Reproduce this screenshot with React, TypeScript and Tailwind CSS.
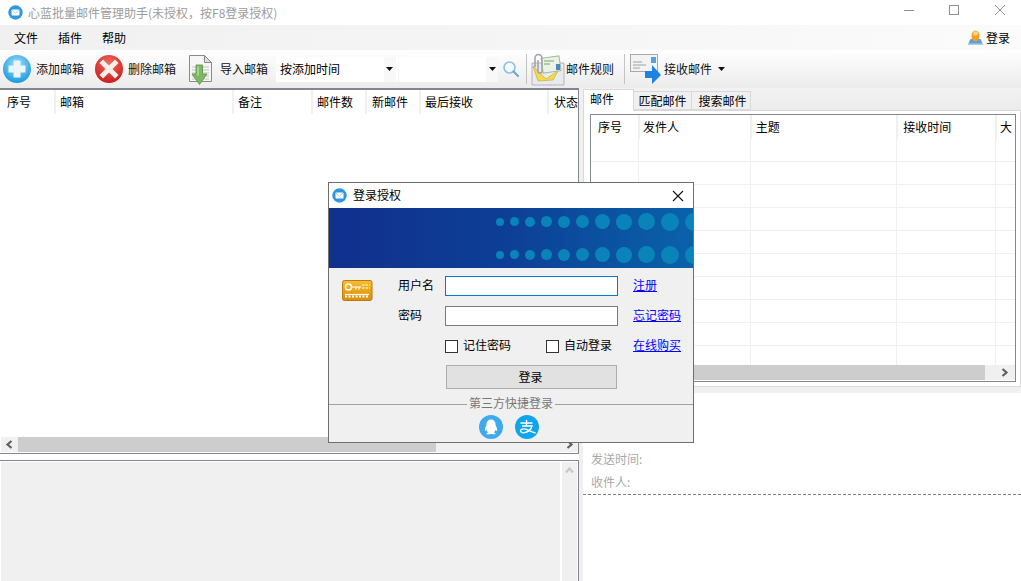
import React from "react";

const Chevron = ({ d, c = "#606060" }: { d: "l" | "r" | "u"; c?: string }) => (
  <svg width="9" height="9" viewBox="0 0 9 9" fill="none" stroke={c} strokeWidth="2.2">
    {d === "l" && <path d="M6.5 1 L2.5 4.5 L6.5 8" />}
    {d === "r" && <path d="M2.5 1 L6.5 4.5 L2.5 8" />}
    {d === "u" && <path d="M1 6.5 L4.5 2.5 L8 6.5" />}
  </svg>
);

const Caret = () => (
  <svg width="7" height="4" viewBox="0 0 7 4"><path d="M0 0H7L3.5 4Z" fill="#111" /></svg>
);

const MailLogo = () => (
  <svg width="15" height="15" viewBox="0 0 15 15">
    <circle cx="7.5" cy="7.5" r="7.2" fill="#2f97e0" />
    <rect x="3.5" y="4.5" width="8" height="6" rx="1" fill="#fff" />
    <path d="M3.8 5 L7.5 8 L11.2 5" fill="none" stroke="#8cc6ee" strokeWidth="0.8" />
  </svg>
);

const PlusIcon = () => (
  <svg width="30" height="30" viewBox="0 0 30 30">
    <defs>
      <radialGradient id="pb" cx="50%" cy="35%" r="65%">
        <stop offset="0" stopColor="#a5def8" />
        <stop offset="1" stopColor="#189be0" />
      </radialGradient>
    </defs>
    <circle cx="15" cy="15" r="14" fill="url(#pb)" />
    <path d="M11.5 6.5h7v5h5v7h-5v5h-7v-5h-5v-7h5z" fill="#eaf6fc" />
  </svg>
);

const DelIcon = () => (
  <svg width="30" height="30" viewBox="0 0 30 30">
    <defs>
      <radialGradient id="pr" cx="50%" cy="30%" r="70%">
        <stop offset="0" stopColor="#f26a62" />
        <stop offset="1" stopColor="#c81e1e" />
      </radialGradient>
    </defs>
    <circle cx="15" cy="15" r="14" fill="url(#pr)" />
    <path d="M9 9 L21 21 M21 9 L9 21" stroke="#f7efe8" strokeWidth="5" strokeLinecap="square" />
  </svg>
);

const ImportIcon = () => (
  <svg width="25" height="31" viewBox="0 0 25 31">
    <path d="M0.5 1.5h15l7 7v19h-22z" fill="#f6f6f6" stroke="#8a8a8a" />
    <path d="M15.5 1.5v7h7z" fill="#dcdcdc" stroke="#8a8a8a" />
    <path d="M3 13h17M3 16h17M3 19h17M3 22h17M3 25h17" stroke="#c4c4c4" />
    <path d="M7 11h6.5v9h4.5l-7.500 10.500L3 20h4z" fill="#7fb865" stroke="#659a4d" strokeWidth="0.9" />
    <path d="M9 12.5v9" stroke="#b5dba3" strokeWidth="1.5" />
  </svg>
);

const RuleIcon = () => (
  <svg width="34" height="33" viewBox="0 0 34 33">
    <rect x="1" y="10" width="32" height="22" fill="#e6ebef" />
    <rect x="1" y="10" width="32" height="22" fill="none" stroke="#e2a4ab" strokeDasharray="2 2" />
    <rect x="1" y="10" width="32" height="22" fill="none" stroke="#9db4d6" strokeDasharray="2 2" strokeDashoffset="2" />
    <rect x="11" y="4" width="18" height="15" fill="#eaf3e6" stroke="#a7b8a0" transform="rotate(-8 20 11)" />
    <path d="M13 8h10M13 11h6" stroke="#9cc08f" strokeWidth="1.5" />
    <rect x="25" y="11" width="4" height="6" fill="#4f86c0" />
    <path d="M2 13 L15 26 L27 18 L22 27 L7 28 Z" fill="#f3d850" stroke="#cfae30" strokeWidth="0.7" />
    <path d="M4 14 V5 A3.5 3.5 0 0 1 11 5 V18 A2 2 0 0 1 7 18 V7" fill="none" stroke="#9aa2a8" strokeWidth="1.5" />
  </svg>
);

const RecvIcon = () => (
  <svg width="32" height="30" viewBox="0 0 32 30">
    <rect x="0.5" y="0.5" width="27" height="17" fill="#f3f3f3" stroke="#a8a8a8" />
    <path d="M3 8h9M3 11h13M3 14h7" stroke="#a0a0a0" />
    <rect x="21" y="3" width="5" height="6" fill="#5aa0dd" />
    <path d="M15 17h7v-6l9 10-9 9v-6h-7z" fill="#1e82e0" />
  </svg>
);

const UserIcon = () => (
  <svg width="15" height="15" viewBox="0 0 15 15">
    <path d="M0 14.5 L2.5 9 H12.5 L15 14.5Z" fill="#5d9fd8" />
    <path d="M1 13.5h13v1H1z" fill="#a9d0ee" />
    <ellipse cx="7.5" cy="6" rx="4" ry="5.5" fill="#f2a024" />
    <ellipse cx="7.5" cy="3.4" rx="2.4" ry="2.2" fill="#fbd67e" />
  </svg>
);

const KeyCard = () => (
  <svg width="31" height="22" viewBox="0 0 31 22">
    <defs>
      <linearGradient id="kc" x1="0" y1="0" x2="0" y2="1">
        <stop offset="0" stopColor="#f7bd2e" />
        <stop offset="1" stopColor="#dc8e08" />
      </linearGradient>
    </defs>
    <rect x="0.5" y="0.5" width="29.5" height="20" rx="2" fill="url(#kc)" stroke="#b97a10" />
    <circle cx="6.5" cy="7" r="3" fill="none" stroke="#fff" strokeWidth="1.4" />
    <path d="M9.5 7H19M14 7v2.5M17 7v2.5" stroke="#fff" strokeWidth="1.2" />
    <path d="M20 5h8M20 8h8" stroke="#fff" strokeDasharray="2.5 1" />
    <path d="M3 14.5h24" stroke="#fff" strokeWidth="1.2" />
    <path d="M3 16.5h24" stroke="#fff" strokeWidth="2" strokeDasharray="2 1.5" />
  </svg>
);

const QQIcon = () => (
  <svg width="24" height="24" viewBox="0 0 24 24">
    <circle cx="12" cy="12" r="12" fill="#3fa9ee" />
    <path d="M12 4.5c-3.2 0-4.6 2.6-4.6 5.4 0 .7-1.6 3-1.6 5 0 1.4.8 1.2 1.7.2.3 1 .9 1.8 1.5 2.3-1 .4-1.7.9-1.4 1.5.4.5 3.2.5 4.4-.2 1.2.7 4 .7 4.4.2.3-.6-.4-1.1-1.4-1.5.6-.5 1.2-1.3 1.5-2.3.9 1 1.7 1.2 1.7-.2 0-2-1.6-4.3-1.6-5 0-2.8-1.4-5.4-4.6-5.4z" fill="#fff" />
  </svg>
);

const AlipayIcon = () => (
  <svg width="24" height="24" viewBox="0 0 24 24">
    <circle cx="12" cy="12" r="12" fill="#0ea5ea" />
    <path d="M5.5 8h12M11.5 4.8v6M7 11h10c-1 3.6-4.5 6-7.5 6.6-2.5.4-4-.4-4-1.8 0-1.6 2.5-2.4 5-1.6 3 1 6 2.8 10 3.8" fill="none" stroke="#fff" strokeWidth="1.4" />
  </svg>
);

const Dots = () => {
  const sizes = [8, 9, 10, 11, 12, 13, 15, 16, 17, 18, 18];
  return (
    <div className="flex items-center gap-[6px] h-[18px] pl-[167px]">
      {sizes.map((s, i) => (
        <span
          key={i}
          className="rounded-full bg-[#0a84b8] shrink-0"
          style={{ width: s, height: s }}
        />
      ))}
    </div>
  );
};

const leftCols = [
  ["序号", "w-[54px] pl-[7px]"],
  ["邮箱", "w-[178px] border-l-2 border-[#f0f0f0] pl-[4px]"],
  ["备注", "w-[79px] border-l-2 border-[#f0f0f0] pl-[4px]"],
  ["邮件数", "w-[54px] border-l-2 border-[#f0f0f0] pl-[4px]"],
  ["新邮件", "w-[54px] border-l-2 border-[#f0f0f0] pl-[5px]"],
  ["最后接收", "w-[128px] border-l-2 border-[#f0f0f0] pl-[4px]"],
  ["状态", "w-[30px] border-l-2 border-[#f0f0f0] pl-[5px]"],
];

const rightCols = [
  ["序号", "w-[47px] pl-[7px]"],
  ["发件人", "w-[112px] border-l-2 border-[#f0f0f0] pl-[3px]"],
  ["主题", "w-[147px] border-l-2 border-[#f0f0f0] pl-[4px]"],
  ["接收时间", "w-[99px] border-l-2 border-[#f0f0f0] pl-[5px]"],
  ["大", "w-[20px] border-l-2 border-[#f0f0f0] pl-[3px]"],
];

const gridCols = ["w-[48px]", "w-[112px]", "w-[147px]", "w-[99px]", "w-[19px]"];

function ToolText({ children, cls = "" }: { children: React.ReactNode; cls?: string }) {
  return <span className={`text-[12px] leading-[16px] text-[#111] whitespace-nowrap ${cls}`}>{children}</span>;
}

export default function App() {
  return (
    <div
      className="relative w-[1021px] h-[581px] overflow-hidden bg-white text-black flex flex-col"
      style={{ fontFamily: '"Noto Sans CJK SC", "Liberation Sans", sans-serif' }}
    >
      {/* title bar */}
      <div className="h-[25px] shrink-0 flex items-center bg-white pl-[8px]">
        <MailLogo />
        <span className="ml-[5px] text-[12px] text-[#9c9c9c]">心蓝批量邮件管理助手(未授权，按F8登录授权)</span>
        <div className="ml-auto flex items-center h-full">
          <svg width="120" height="20" viewBox="0 0 120 20" className="mb-[4px]" fill="none" stroke="#8f8f8f">
            <path d="M3 9.5H13" />
            <rect x="48.5" y="4.5" width="9" height="9" />
            <path d="M94 4L104 14M104 4L94 14" />
          </svg>
        </div>
      </div>

      {/* menu */}
      <div className="h-[25px] shrink-0 flex items-center bg-gradient-to-r from-[#f0f0f0] via-[#f5f5f5] to-[#fbfbfb] text-[12px] pl-[14px] pr-[11px]">
        <span className="w-[44px]">文件</span>
        <span className="w-[44px]">插件</span>
        <span>帮助</span>
        <div className="ml-auto flex items-center gap-[3px]">
          <UserIcon />
          <span>登录</span>
        </div>
      </div>

      {/* toolbar */}
      <div className="h-[38px] shrink-0 flex items-center bg-gradient-to-b from-white to-[#ececec] pl-[2px]">
        <PlusIcon />
        <ToolText cls="ml-[4px]">添加邮箱</ToolText>
        <div className="ml-[10px]"><DelIcon /></div>
        <ToolText cls="ml-[4px]">删除邮箱</ToolText>
        <div className="ml-[13px]"><ImportIcon /></div>
        <ToolText cls="ml-[6px]">导入邮箱</ToolText>
        <div className="ml-[8px] w-[122px] h-[25px] bg-white flex items-center pl-[4px] justify-between text-[12px]">
          <span>按添加时间</span>
          <div className="w-[12px] h-full bg-[#f8f8f8] flex items-center pl-[2px] mr-[2px]"><Caret /></div>
        </div>
        <div className="ml-[1px] w-[99px] h-[25px] bg-white flex items-center justify-end">
          <div className="w-[12px] h-full bg-[#f8f8f8] flex items-center pl-[3px]"><Caret /></div>
        </div>
        <svg width="18" height="18" viewBox="0 0 18 18" className="ml-[4px]" fill="none">
          <circle cx="7.5" cy="7.5" r="5.5" stroke="#8fc1e4" strokeWidth="1.6" fill="#f4fbff" />
          <path d="M11.5 11.5L16 16" stroke="#6ea9d6" strokeWidth="2.2" strokeLinecap="round" />
        </svg>
        <div className="ml-[6px] w-px h-[30px] bg-[#c4c4c4]" />
        <div className="ml-[4px]"><RuleIcon /></div>
        <ToolText cls="ml-px">邮件规则</ToolText>
        <div className="ml-[10px] w-px h-[30px] bg-[#c4c4c4]" />
        <div className="ml-[5px]"><RecvIcon /></div>
        <ToolText cls="ml-[2px]">接收邮件</ToolText>
        <div className="ml-[6px]"><Caret /></div>
      </div>

      {/* main */}
      <div className="flex-1 flex min-h-0">
        {/* left */}
        <div className="w-[579px] shrink-0 flex flex-col">
          <div className="h-[366px] shrink-0 border-t-2 border-r border-b border-[#828790] flex flex-col">
            <div className="h-[24px] flex items-center text-[12px] shrink-0">
              {leftCols.map(([t, w], i) => (
                <div key={i} className={`${w} h-full flex items-center whitespace-nowrap`}>{t}</div>
              ))}
            </div>
            <div className="flex-1" />
            <div className="h-[15px] mb-px ml-px flex bg-[#f0f0f0] shrink-0">
              <div className="w-[17px] flex items-center justify-center"><Chevron d="l" /></div>
              <div className="w-[418px] bg-[#cdcdcd]" />
              <div className="flex-1 flex items-center justify-end pr-[4px]"><Chevron d="r" /></div>
            </div>
          </div>
          <div className="h-[6px] shrink-0 bg-white" />
          <div className="flex-1 min-h-0 border-t border-r border-[#828790] bg-white pl-px pt-px pr-px">
            <div className="h-full bg-[#f0f0f0] flex justify-end">
              <div className="w-[17px] border-l-2 border-white flex justify-center pt-[4px]">
                <Chevron d="u" c="#c8c8c8" />
              </div>
            </div>
          </div>
        </div>

        {/* right */}
        <div className="flex-1 min-w-0 flex flex-col pl-[4px] bg-[#f0f0f0]">
          <div className="h-[305px] shrink-0 flex flex-col bg-[#f0f0f0]">
            <div className="h-[22px] shrink-0 flex items-end text-[12px] bg-gradient-to-b from-[#f2f2f2] to-[#ececec] relative">
              <div className="w-[51px] h-[22px] bg-white border border-b-0 border-[#d9d9d9] pl-[6px] pb-[4px] flex items-center relative z-10 -mb-px">邮件</div>
              <div className="w-[58px] h-[19px] bg-[#f0f0f0] border-y border-r border-[#d9d9d9] flex items-center justify-center whitespace-nowrap">匹配邮件</div>
              <div className="w-[59px] h-[19px] bg-[#f0f0f0] border-y border-r border-[#d9d9d9] flex items-center justify-center pl-[3px] whitespace-nowrap">搜索邮件</div>
            </div>
            <div className="h-[277px] shrink-0 mr-0 bg-white border border-[#d9d9d9] pl-[6px] pt-[3px] pr-[4px]">
              <div className="h-[268px] border border-[#828790] flex flex-col">
                <div className="h-[24px] shrink-0 flex text-[12px]">
                  {rightCols.map(([t, w], i) => (
                    <div key={i} className={`${w} h-full flex items-center overflow-hidden whitespace-nowrap`}>{t}</div>
                  ))}
                </div>
                <div className="flex-1 min-h-0 overflow-hidden">
                  {Array.from({ length: 10 }).map((_, r) => (
                    <div key={r} className="flex h-[23px] border-b border-[#f0f0f0]">
                      {gridCols.map((w, i) => (
                        <div key={i} className={`${w} h-full border-r border-[#f0f0f0] last:border-r-0`} />
                      ))}
                    </div>
                  ))}
                </div>
                <div className="h-[15px] mb-px flex bg-[#f0f0f0] shrink-0">
                  <div className="flex-1 bg-[#cdcdcd]" />
                  <div className="w-[30px] flex items-center justify-end pr-[6px]"><Chevron d="r" /></div>
                </div>
              </div>
            </div>
          </div>
          <div className="flex-1 min-h-0 bg-white text-[12px] text-[#a8a8a8] flex flex-col pl-[8px]">
            <div className="h-[54px] shrink-0" />
            <div className="h-[23px] flex items-center">发送时间:</div>
            <div className="h-[23px] flex items-center">收件人:</div>
            <div className="-ml-[8px] mt-px border-t border-dashed border-[#808080]" />
          </div>
        </div>
      </div>

      {/* dialog */}
      <div className="absolute left-[328px] top-[182px] w-[366px] h-[261px] border border-[#6f6f6f] bg-[#f0f0f0] flex flex-col">
        <div className="h-[25px] shrink-0 bg-white flex items-center pl-[3px] pr-[8px]">
          <MailLogo />
          <span className="ml-[6px] text-[12px] pb-[2px]">登录授权</span>
          <svg width="12" height="12" viewBox="0 0 12 12" className="ml-auto mr-px" fill="none" stroke="#111" strokeWidth="1.1">
            <path d="M1 1L11 11M11 1L1 11" />
          </svg>
        </div>
        <div className="h-[60px] shrink-0 bg-gradient-to-r from-[#10308c] via-[#0d3f96] to-[#0a62aa] flex flex-col justify-center gap-[15px] overflow-hidden">
          <Dots />
          <Dots />
        </div>
        <div className="flex-1 min-h-0 relative flex flex-col">
          <div className="flex pt-[8px]">
            <div className="w-[13px]" />
            <div className="mt-[4px]"><KeyCard /></div>
            <div className="flex flex-col ml-[24px] text-[12px]">
              <div className="flex items-center h-[20px]">
                <span className="w-[48px] pl-px pb-[2px] whitespace-nowrap">用户名</span>
                <div className="w-[173px] h-[20px] bg-white border border-[#0078d7]" />
                <a className="ml-[15px] pb-[2px] text-[#0000ff] underline whitespace-nowrap">注册</a>
              </div>
              <div className="flex items-center h-[20px] mt-[10px]">
                <span className="w-[48px] pl-px pb-[2px] whitespace-nowrap">密码</span>
                <div className="w-[173px] h-[20px] bg-white border border-[#7a7a7a]" />
                <a className="ml-[15px] pb-[2px] text-[#0000ff] underline whitespace-nowrap">忘记密码</a>
              </div>
              <div className="flex items-center h-[20px] mt-[10px]">
                <div className="w-[48px]" />
                <div className="w-[13px] h-[13px] bg-white border border-[#333] shrink-0" />
                <span className="ml-[5px] w-[83px] pb-[2px] whitespace-nowrap">记住密码</span>
                <div className="w-[13px] h-[13px] bg-white border border-[#333] shrink-0" />
                <span className="ml-[5px] w-[69px] pb-[2px] whitespace-nowrap">自动登录</span>
                <a className="pb-[2px] text-[#0000ff] underline whitespace-nowrap">在线购买</a>
              </div>
            </div>
          </div>
          <button className="ml-[117px] mt-[9px] w-[171px] h-[24px] bg-[#e1e1e1] border border-[#adadad] text-[12px] flex items-center justify-center pr-[2px]">登录</button>
          <div className="flex items-center mt-[6px] h-[18px]">
            <div className="flex-1 h-px bg-[#a0a0a0]" />
            <span className="px-[2px] pb-[2px] text-[12px] text-[#777]">第三方快捷登录</span>
            <div className="flex-1 h-px bg-[#a0a0a0]" />
          </div>
          <div className="flex gap-[12px] pl-[150px] mt-[2px]">
            <QQIcon />
            <AlipayIcon />
          </div>
        </div>
      </div>
    </div>
  );
}
